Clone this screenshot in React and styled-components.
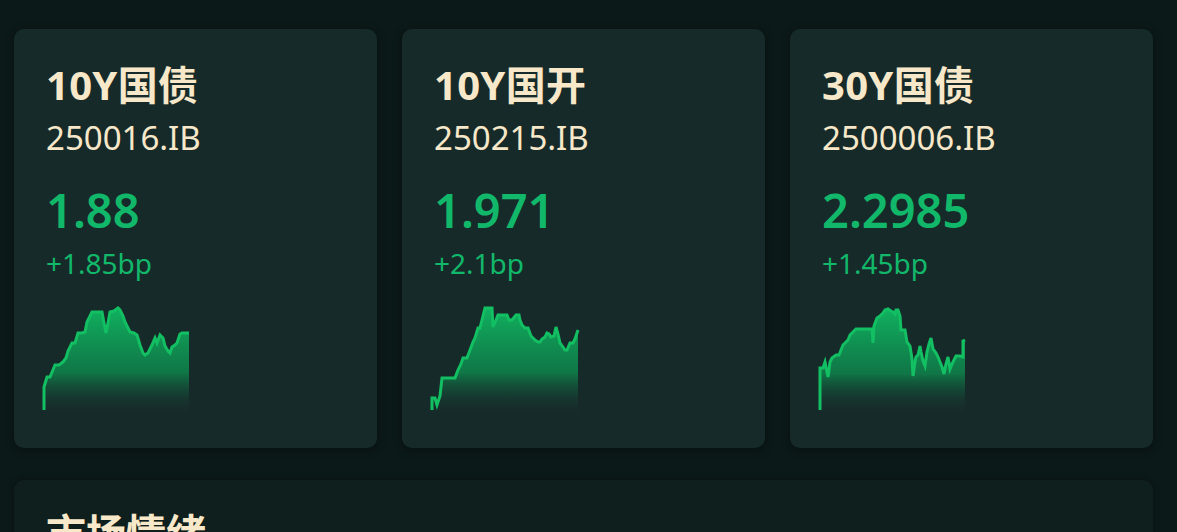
import React from 'react'
import styled, { createGlobalStyle } from 'styled-components'

const GlobalStyle = createGlobalStyle`
  html, body {
    margin: 0;
    padding: 0;
    background: #0b1918;
  }
  body {
    font-family: 'Noto Sans', 'Noto Sans CJK SC', sans-serif;
    overflow: hidden;
  }
`

const Page = styled.div`
  width: 1177px;
  height: 532px;
  padding: 29px 24px 0 14px;
  box-sizing: border-box;
  background: #0b1918;
  overflow: hidden;
`

const CardRow = styled.div`
  display: grid;
  grid-template-columns: repeat(3, 363px);
  column-gap: 25px;
`

const Card = styled.div`
  height: 419px;
  box-sizing: border-box;
  padding: 33px 30px 0 32px;
  border-radius: 10px;
  background: #172a2a;
  box-shadow: 0 2px 10px rgba(0, 0, 0, 0.35);
`

const Name = styled.div`
  font-size: 40px;
  line-height: 46px;
  font-weight: 700;
  letter-spacing: 0.3px;
  color: #f7e8c9;
`

const Code = styled.div`
  margin-top: 10px;
  font-size: 33px;
  line-height: 40px;
  color: #f7e8c9;
`

const Yield = styled.div`
  margin-top: 26px;
  font-size: 47px;
  line-height: 52px;
  font-weight: 600;
  color: #12b86a;
`

const Change = styled.div`
  margin-top: 10px;
  font-size: 28px;
  line-height: 34px;
  color: #12b86a;
`

const Spark = styled.svg`
  display: block;
  margin: 26px 0 0 -2px;
  width: 146px;
  height: 110px;
  overflow: visible;
`

const Panel = styled.div`
  margin-top: 32px;
  height: 120px;
  box-sizing: border-box;
  padding: 30px 32px;
  border-radius: 10px 10px 0 0;
  background: #0f1f1e;
  box-shadow: 0 -1px 6px rgba(0, 0, 0, 0.25);
`

const PanelTitle = styled.div`
  font-size: 40px;
  line-height: 46px;
  font-weight: 700;
  color: #f7e8c9;
`

const bonds = [
  {
    name: '10Y国债',
    code: '250016.IB',
    value: '1.88',
    change: '+1.85bp',
    points: [[0, 104], [0, 81], [3, 71], [6, 71], [11, 59], [15, 59], [19, 56], [22, 52], [24, 45], [28, 37], [31, 37], [34, 27], [38, 27], [41, 26], [43, 16], [48, 6], [58, 6], [60, 17], [62, 27], [64, 17], [66, 6], [70, 5], [74, 2], [76, 4], [79, 10], [81, 16], [84, 22], [86, 26], [90, 27], [93, 29], [96, 39], [99, 47], [101, 49], [104, 47], [108, 39], [111, 32], [113, 37], [116, 29], [119, 32], [121, 40], [124, 45], [126, 47], [128, 41], [131, 39], [133, 37], [136, 28], [138, 27], [145, 27]]
  },
  {
    name: '10Y国开',
    code: '250215.IB',
    value: '1.971',
    change: '+2.1bp',
    points: [[0, 104], [0, 92], [3, 92], [5, 99], [8, 90], [10, 72], [13, 72], [18, 72], [23, 72], [26, 64], [29, 58], [31, 52], [35, 52], [38, 44], [41, 36], [43, 32], [46, 22], [48, 22], [53, 2], [57, 2], [60, 2], [61, 21], [64, 14], [66, 9], [70, 9], [75, 9], [77, 14], [80, 14], [84, 9], [87, 9], [88, 14], [90, 19], [93, 22], [96, 22], [99, 30], [103, 34], [106, 36], [108, 36], [110, 33], [113, 31], [115, 27], [117, 28], [119, 31], [122, 30], [124, 21], [126, 28], [128, 37], [131, 41], [133, 44], [135, 44], [138, 37], [141, 37], [143, 33], [146, 24]]
  },
  {
    name: '30Y国债',
    code: '2500006.IB',
    value: '2.2985',
    change: '+1.45bp',
    points: [[0, 104], [0, 62], [3, 62], [5, 56], [7, 66], [8, 71], [10, 56], [12, 52], [16, 49], [19, 49], [21, 44], [23, 39], [26, 36], [28, 34], [30, 29], [33, 26], [36, 23], [40, 23], [45, 23], [50, 23], [52, 23], [53, 37], [54, 20], [57, 12], [60, 10], [63, 7], [65, 4], [68, 3], [71, 5], [73, 6], [75, 8], [76, 4], [78, 4], [80, 10], [81, 24], [85, 24], [87, 36], [90, 40], [92, 53], [93, 70], [95, 56], [96, 51], [98, 49], [100, 40], [101, 46], [103, 55], [105, 60], [107, 46], [109, 38], [111, 32], [113, 43], [116, 47], [118, 51], [120, 56], [122, 61], [124, 68], [126, 58], [128, 51], [130, 63], [132, 58], [134, 54], [136, 50], [140, 50], [143, 51], [143, 35], [145, 34]]
  }
]

const Sparkline = ({ id, points }) => {
  const line = points.map(([x, y]) => `${x},${y}`).join(' ')
  const last = points[points.length - 1]
  const area = `M0,110 L${line.replace(/ /g, ' L')} L${last[0]},110 Z`
  return (
    <Spark viewBox='0 0 146 110'>
      <defs>
        <linearGradient id={id} x1='0' y1='0' x2='0' y2='1'>
          <stop offset='0%' stopColor='#10b862' stopOpacity='0.95' />
          <stop offset='60%' stopColor='#0e8a4e' stopOpacity='0.8' />
          <stop offset='100%' stopColor='#172a2a' stopOpacity='0' />
        </linearGradient>
      </defs>
      <path d={area} fill={`url(#${id})`} />
      <polyline points={line} fill='none' stroke='#12bf62' strokeWidth='3' strokeLinejoin='miter' />
    </Spark>
  )
}

const BondCard = ({ bond, index }) => (
  <Card>
    <Name>{bond.name}</Name>
    <Code>{bond.code}</Code>
    <Yield>{bond.value}</Yield>
    <Change>{bond.change}</Change>
    <Sparkline id={`spark-${index}`} points={bond.points} />
  </Card>
)

const App = () => (
  <Page>
    <GlobalStyle />
    <CardRow>
      {bonds.map((bond, i) => <BondCard key={bond.code} bond={bond} index={i} />)}
    </CardRow>
    <Panel>
      <PanelTitle>市场情绪</PanelTitle>
    </Panel>
  </Page>
)

export default App
